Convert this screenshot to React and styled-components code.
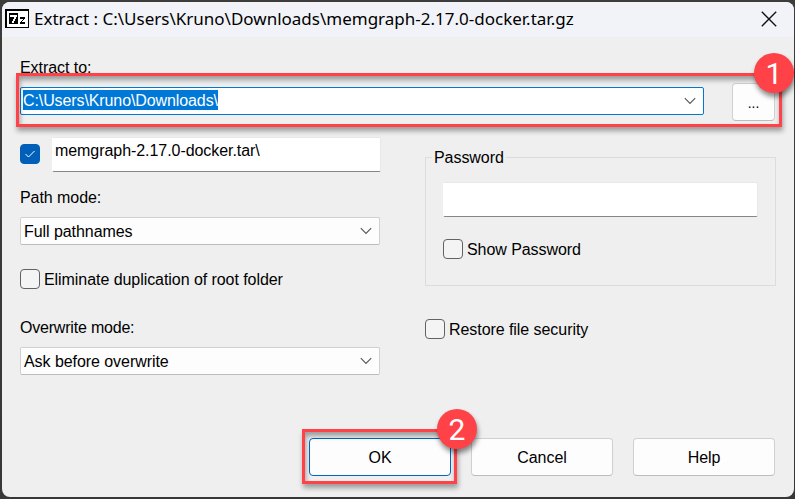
import React from "react";
import styled, { createGlobalStyle, css } from "styled-components";

const Global = createGlobalStyle`
  *, *::before, *::after { box-sizing: border-box; }
  body {
    margin: 0;
    background: #383637;
    overflow: hidden;
  }
`;

const Desktop = styled.div`
  width: 795px;
  height: 499px;
  padding: 2px 1px 2px 2px;
  background: linear-gradient(to bottom, #3d3c3b, #383637);
`;

const Dialog = styled.main`
  height: 495px;
  border-radius: 8px;
  background: #efefef;
  color: #000;
  font: 16px/20px "Liberation Sans", Arial, sans-serif;
  letter-spacing: -0.06px;
`;

const TitleBar = styled.header`
  display: flex;
  align-items: center;
  height: 35px;
  padding: 0 17px 2px 3px;
  border-radius: 8px 8px 0 0;
  background: #f1f3f9;
`;

const Title = styled.h1`
  flex: 1;
  margin: 0 0 0 5px;
  font: 400 17px/24px "Noto Sans", sans-serif;
  letter-spacing: 0;
  white-space: nowrap;
`;

const Content = styled.div`
  padding: 21px 18px 0;
`;

const Label = styled.div`
  height: 20px;
  margin-top: ${(p) => p.$top || 0}px;
  letter-spacing: ${(p) => (p.$tight ? -0.2 : -0.06)}px;
  white-space: nowrap;
`;

const PathRow = styled.div`
  position: relative;
  display: flex;
  justify-content: space-between;
  height: 38px;
  margin: 5px 1px 0 0;
`;

const Combo = styled.div`
  display: flex;
  align-items: center;
  justify-content: space-between;
  flex: none;
  width: ${(p) => (p.$active ? 684 : 360)}px;
  height: 28px;
  margin-top: ${(p) => p.$top}px;
  padding: ${(p) => (p.$active ? "0 7px 0 2px" : "0 7px 0 3px")};
  border: 1px solid ${(p) => (p.$active ? "#0078d4" : "#d0d0d0")};
  border-bottom-color: ${(p) => (p.$active ? "#0078d4" : "#bcbcbc")};
  border-radius: 2px;
  background: ${(p) => (p.$active ? "#fff" : "#fdfdfd")};
  line-height: 22px;
`;

const Selection = styled.span`
  height: 20px;
  margin-bottom: 2px;
  background: #0078d7;
  color: #fff;
  line-height: 22px;
  letter-spacing: -0.1px;
`;

const Value = styled.span`
  height: 20px;
`;

const Button = styled.button`
  width: ${(p) => (p.$small ? 43 : 142)}px;
  height: 38px;
  padding: 2px 0 0;
  border: 1px solid ${(p) => (p.$primary ? "#0067c0" : "#d0d0d0")};
  border-bottom-color: ${(p) => (p.$primary ? "#0067c0" : "#bcbcbc")};
  border-radius: 4px;
  background: #fdfdfd;
  color: #000;
  font: inherit;
  font-size: ${(p) => (p.$small ? 14 : 16)}px;
  letter-spacing: inherit;
`;

const Highlight = styled.div`
  position: absolute;
  border: 3px solid #ff4247;
  box-shadow: 1px 4px 5px rgba(0, 0, 0, 0.35), inset 1px 4px 5px rgba(0, 0, 0, 0.35);
  pointer-events: none;
  ${(p) =>
    p.$wide
      ? css`inset: -10px -7px -6px -4px;`
      : css`inset: -9px -6px -8px -7px;`}
`;

const Step = styled.span`
  position: absolute;
  top: ${(p) => (p.$wide ? -30 : -29)}px;
  right: ${(p) => (p.$wide ? -19 : -26)}px;
  width: 40px;
  height: 40px;
  border-radius: 50%;
  background: #ff4247;
  color: #fff;
  box-shadow: 1px 4px 5px rgba(0, 0, 0, 0.45);
  font: 30px/41px Roboto, sans-serif;
  text-align: center;
`;

const Columns = styled.div`
  display: grid;
  grid-template-columns: 361px 351px;
  column-gap: 44px;
  margin-top: 16px;
`;

const Column = styled.section`
  display: flex;
  flex-direction: column;
`;

const FolderRow = styled.div`
  display: flex;
  align-items: flex-start;
  gap: 12px;
  height: 35px;
`;

const CheckSlot = styled.div`
  padding-top: 7px;
`;

const TextField = styled.div`
  width: ${(p) => p.$width}px;
  height: 35px;
  padding: 3px 2px;
  border: 1px solid #e8e8e8;
  border-bottom-color: #868686;
  border-left-color: #fff;
  border-radius: 2px;
  background: #fff;
`;

const Box = styled.span`
  display: grid;
  place-items: center;
  flex: none;
  width: 20px;
  height: 20px;
  border: 1px solid ${(p) => (p.$on ? "#005fb8" : "#626262")};
  border-radius: 4px;
  background: ${(p) => (p.$on ? "#005fb8" : "#f4f4f4")};
`;

const Option = styled.div`
  display: flex;
  gap: 4px;
  height: 20px;
  margin-top: ${(p) => p.$top}px;
  line-height: 22px;
  white-space: nowrap;
`;

const Group = styled.fieldset`
  height: 139px;
  min-width: 0;
  margin: 10px 0 0;
  padding: 15px 17px 0;
  border: 1px solid #dcdcdc;
`;

const Legend = styled.legend`
  height: 20px;
  margin-left: -11px;
  padding: 0 2px;
  line-height: 22px;
`;

const Footer = styled.footer`
  display: flex;
  justify-content: flex-end;
  gap: 20px;
  margin: 63px 1px 0 0;
`;

const Target = styled.div`
  position: relative;
  height: 38px;
`;

const Chevron = () => (
  <svg width="12" height="8" viewBox="0 0 12 8" fill="none" stroke="#555" strokeWidth="1.1">
    <path d="M.8 1.2 6 6.4l5.2-5.2" />
  </svg>
);

const Check = () => (
  <svg width="12" height="10" viewBox="0 0 12 10" fill="none" stroke="#fff" strokeWidth="1">
    <path d="m1.5 5 3 3L10.5 2" />
  </svg>
);

const AppIcon = () => (
  <svg width="24" height="19" viewBox="0 0 24 19" shapeRendering="crispEdges">
    <path fill="#000" d="M0 0h24v19H0z" />
    <path fill="#fff" d="M1.5 1.5h21v16h-21z" />
    <path fill="#000" d="M4 4h9v11H4z" />
    <path fill="#fff" d="M5 6h7v2h-1v2h-1v2H9v2H7v-2h1v-2h1V8H5z" />
    <path fill="#000" d="M15 8h5v2h-1v1h-1v1h-1v1h3v2h-5v-2h1v-1h1v-1h1v-1h-3z" />
  </svg>
);

const Close = () => (
  <svg width="16" height="16" viewBox="0 0 16 16" fill="none" stroke="#111" strokeWidth="1.35">
    <path d="m.8.8 14.4 14.4M15.2.8.8 15.2" />
  </svg>
);

export default function App() {
  return (
    <Desktop>
      <Global />
      <Dialog>
        <TitleBar>
          <AppIcon />
          <Title>Extract : C:\Users\Kruno\Downloads\memgraph-2.17.0-docker.tar.gz</Title>
          <Close />
        </TitleBar>
        <Content>
          <Label>Extract to:</Label>
          <PathRow>
            <Combo $active $top={4}>
              <Selection>C:\Users\Kruno\Downloads\</Selection>
              <Chevron />
            </Combo>
            <Button $small>...</Button>
            <Highlight $wide />
            <Step $wide>1</Step>
          </PathRow>
          <Columns>
            <Column>
              <FolderRow>
                <CheckSlot><Box $on><Check /></Box></CheckSlot>
                <TextField $width={329}>memgraph-2.17.0-docker.tar\</TextField>
              </FolderRow>
              <Label $top={16}>Path mode:</Label>
              <Combo $top={9}><Value>Full pathnames</Value><Chevron /></Combo>
              <Option $top={24}><Box />Eliminate duplication of root folder</Option>
              <Label $top={29} $tight>Overwrite mode:</Label>
              <Combo $top={9}><Value>Ask before overwrite</Value><Chevron /></Combo>
            </Column>
            <Column>
              <Group>
                <Legend>Password</Legend>
                <TextField $width={315} />
                <Option $top={22}><Box />Show Password</Option>
              </Group>
              <Option $top={33}><Box />Restore file security</Option>
            </Column>
          </Columns>
          <Footer>
            <Target>
              <Button $primary>OK</Button>
              <Highlight />
              <Step>2</Step>
            </Target>
            <Button>Cancel</Button>
            <Button>Help</Button>
          </Footer>
        </Content>
      </Dialog>
    </Desktop>
  );
}
